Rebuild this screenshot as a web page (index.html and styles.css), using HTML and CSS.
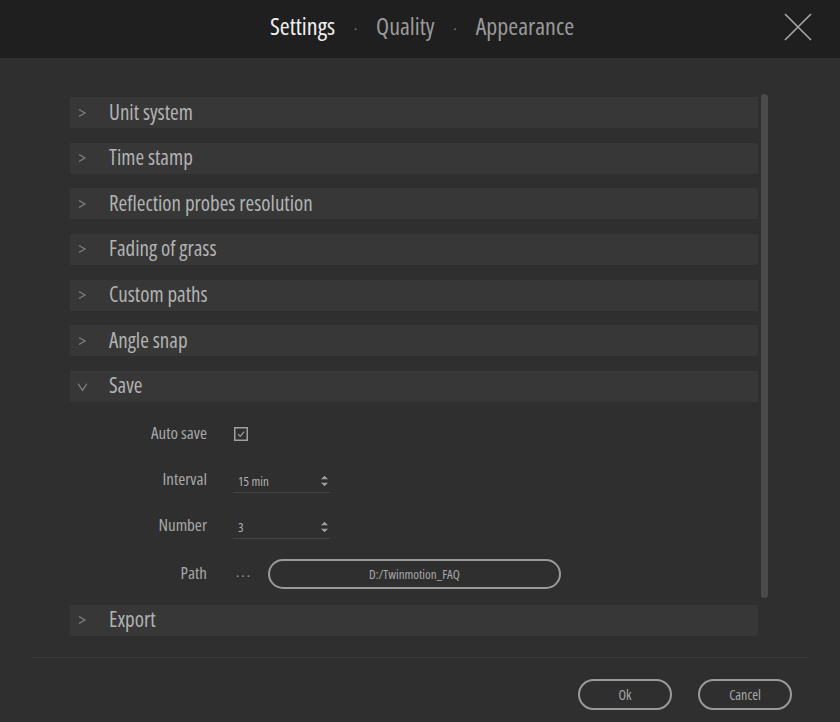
FILE: index.html
```html
<!DOCTYPE html>
<html>
<head>
<meta charset="utf-8">
<link rel="stylesheet" href="styles.css">
</head>
<body>
<div class="app">
  <header class="topbar">
    <nav class="tabs">
      <span class="tab active">Settings</span>
      <span class="dot">·</span>
      <span class="tab">Quality</span>
      <span class="dot">·</span>
      <span class="tab">Appearance</span>
    </nav>
    <button class="close" aria-label="Close">
      <svg width="28" height="28" viewBox="0 0 28 28"><path d="M1 1 L27 27 M27 1 L1 27" stroke="#a8a8a8" stroke-width="1.6" fill="none"/></svg>
    </button>
  </header>

  <main class="content">
    <div class="list">
      <div class="section"><div class="row"><svg class="chev" viewBox="0 0 10 10"><polyline points="2,1.5 8,5 2,8.5"/></svg><span class="title">Unit system</span></div></div>
      <div class="section"><div class="row"><svg class="chev" viewBox="0 0 10 10"><polyline points="2,1.5 8,5 2,8.5"/></svg><span class="title">Time stamp</span></div></div>
      <div class="section"><div class="row"><svg class="chev" viewBox="0 0 10 10"><polyline points="2,1.5 8,5 2,8.5"/></svg><span class="title">Reflection probes resolution</span></div></div>
      <div class="section"><div class="row"><svg class="chev" viewBox="0 0 10 10"><polyline points="2,1.5 8,5 2,8.5"/></svg><span class="title">Fading of grass</span></div></div>
      <div class="section"><div class="row"><svg class="chev" viewBox="0 0 10 10"><polyline points="2,1.5 8,5 2,8.5"/></svg><span class="title">Custom paths</span></div></div>
      <div class="section"><div class="row"><svg class="chev" viewBox="0 0 10 10"><polyline points="2,1.5 8,5 2,8.5"/></svg><span class="title">Angle snap</span></div></div>
      <div class="section open">
        <div class="row"><svg class="chev down" viewBox="0 0 10 10"><polyline points="1,2.5 5,8.5 9,2.5"/></svg><span class="title">Save</span></div>
        <div class="fields">
          <div class="field">
            <span class="label">Auto save</span>
            <span class="checkbox"><svg viewBox="0 0 14 14"><rect x="0.75" y="0.75" width="12.5" height="12.5" fill="none" stroke="#a0a0a0" stroke-width="1.5"/><polyline points="4,7.2 6.2,9.4 10.2,4.6" fill="none" stroke="#a0a0a0" stroke-width="1.2"/></svg></span>
          </div>
          <div class="field">
            <span class="label">Interval</span>
            <span class="spin"><span class="val">15 min</span><svg class="arrows" viewBox="0 0 8 12"><polygon points="4,0 8,4 0,4"/><polygon points="0,8 8,8 4,12"/></svg></span>
          </div>
          <div class="field">
            <span class="label">Number</span>
            <span class="spin"><span class="val">3</span><svg class="arrows" viewBox="0 0 8 12"><polygon points="4,0 8,4 0,4"/><polygon points="0,8 8,8 4,12"/></svg></span>
          </div>
          <div class="field path">
            <span class="label">Path</span>
            <span class="more">···</span>
            <span class="pathbox">D:/Twinmotion_FAQ</span>
          </div>
        </div>
      </div>
      <div class="section"><div class="row"><svg class="chev" viewBox="0 0 10 10"><polyline points="2,1.5 8,5 2,8.5"/></svg><span class="title">Export</span></div></div>
    </div>
    <div class="scrollbar"></div>
  </main>

  <footer class="footer">
    <button class="btn">Ok</button>
    <button class="btn">Cancel</button>
  </footer>
</div>
</body>
</html>
```

FILE: styles.css
```css
* { box-sizing: border-box; }
html, body {
  margin: 0;
  padding: 0;
  background: #2f2f2f;
  width: 840px;
  height: 722px;
  overflow: hidden;
  font-family: "Open Sans", "Roboto Condensed", sans-serif;
  font-stretch: 75%;
  color: #aaaaaa;
}
.app {
  display: flex;
  flex-direction: column;
  height: 722px;
}
.topbar {
  height: 58px;
  background: #1f1f1f;
  display: flex;
  align-items: center;
  justify-content: center;
  position: relative;
}
.tabs {
  display: flex;
  align-items: center;
  gap: 19px;
  margin-left: 4px;
  margin-top: -6px;
}
.tab {
  font-size: 24px;
  line-height: 30px;
  color: #9a9a9a;
}
.tab.active { color: #f0f0f0; }
.dot {
  font-size: 14px;
  color: #8a8a8a;
  margin-top: 4px;
}
.close {
  position: absolute;
  right: 28px;
  top: 13px;
  width: 28px;
  height: 28px;
  padding: 0;
  border: 0;
  background: transparent;
}
.close svg { display: block; }

.content {
  display: flex;
  align-items: flex-start;
  padding-top: 39px;
  padding-left: 70px;
  height: 599px;
}
.list {
  width: 688px;
  display: flex;
  flex-direction: column;
  gap: 14.67px;
}
.row {
  height: 31px;
  background: #373737;
  display: flex;
  align-items: center;
}
.chev {
  width: 10px;
  height: 10px;
  margin-left: 7px;
  fill: none;
  stroke: #808080;
  stroke-width: 1.2;
}
.chev.down { width: 11px; height: 11px; }
.title {
  margin-left: 22px;
  font-size: 21px;
  line-height: 28px;
  margin-top: -2px;
  color: #b2b2b2;
}
.chev.down + .title { margin-left: 21px; }

.fields {
  padding-top: 9px;
  display: flex;
  flex-direction: column;
}
.field {
  height: 46px;
  display: flex;
  align-items: center;
}
.field.path {
  height: 41px;
  align-items: flex-start;
  padding-top: 10px;
}
.label {
  width: 137px;
  text-align: right;
  font-size: 17px;
  line-height: 22px;
  color: #a8a8a8;
  margin-right: 26px;
  margin-top: -2px;
}
.field.path .label { line-height: 32px; }
.field.path .more { line-height: 33px; }
.checkbox { width: 14px; height: 14px; margin-left: 1px; }
.checkbox svg { width: 14px; height: 14px; display: block; }
.spin {
  width: 97px;
  height: 22px;
  border-bottom: 1px solid #444444;
  display: flex;
  align-items: center;
  justify-content: space-between;
  padding-left: 5px;
  padding-right: 2px;
  margin-top: 4px;
}
.val {
  font-size: 13px;
  color: #b0b0b0;
}
.arrows {
  width: 7px;
  height: 12px;
  fill: #a0a0a0;
}
.more {
  font-size: 15px;
  letter-spacing: 2px;
  color: #9a9a9a;
  margin-left: 3px;
  width: 32px;
}
.pathbox {
  width: 293px;
  height: 30px;
  border: 2px solid #9a9a9a;
  border-radius: 15px;
  display: flex;
  align-items: center;
  justify-content: center;
  font-size: 13px;
  color: #a8a8a8;
}

.scrollbar {
  width: 7px;
  height: 504px;
  margin-left: 3px;
  margin-top: -3px;
  background: #4b4b4b;
  border-radius: 4px;
}

.footer {
  margin: 0 33px;
  border-top: 1px solid #3a3a3a;
  display: flex;
  justify-content: flex-end;
  gap: 26px;
  padding-top: 21px;
  padding-right: 15px;
}
.btn {
  width: 94px;
  height: 31px;
  border: 2px solid #9a9a9a;
  border-radius: 16px;
  background: transparent;
  color: #a8a8a8;
  font-family: inherit;
  font-stretch: 75%;
  font-size: 14px;
  padding: 0;
}
```
